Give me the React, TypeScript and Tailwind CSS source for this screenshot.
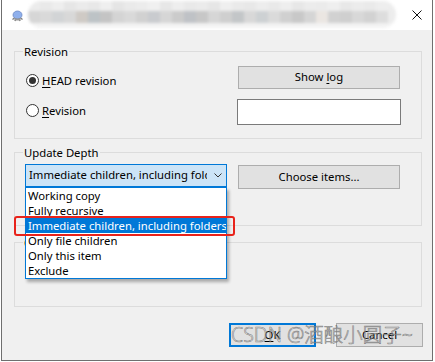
import React from 'react';

const TOP_BLOCKS = [
  'bg-[#ececec]', 'bg-[#e9e9e9]', 'bg-[#eeeeee]', 'bg-[#e6e6e6]', 'bg-[#ebebeb]', 'bg-[#e8e8e8]',
  'bg-[#efefef]', 'bg-[#e5e5e5]', 'bg-[#eaeaea]', 'bg-[#ececec]', 'bg-[#f0f0f0]', 'bg-[#e7e7e7]',
  'bg-[#eeeeee]', 'bg-[#e9e9e9]', 'bg-[#ebebeb]', 'bg-[#e6e6e6]', 'bg-[#efefef]', 'bg-[#eaeaea]',
  'bg-[#e8e8e8]', 'bg-[#ededed]', 'bg-[#e9e9e9]', 'bg-[#eeeeee]', 'bg-[#e7e7e7]', 'bg-[#ececec]',
  'bg-[#ebebeb]', 'bg-[#efefef]', 'bg-[#e8e8e8]', 'bg-[#ececec]', 'bg-[#eaeaea]', 'bg-[#eeeeee]',
];

const BOTTOM_BLOCKS = [
  'bg-[#d6d6d6]', 'bg-[#d9d9d9]', 'bg-[#d2d4d6]', 'bg-[#d8d8d8]', 'bg-[#cfcac5]', 'bg-[#bdc3c6]',
  'bg-[#c4c4c4]', 'bg-[#d4d4d4]', 'bg-[#d9d9d9]', 'bg-[#d1d1d1]', 'bg-[#c9cbcf]', 'bg-[#d6d6d6]',
  'bg-[#cbcbcb]', 'bg-[#bfc2c6]', 'bg-[#c7c7c7]', 'bg-[#d6d6d6]', 'bg-[#cfcfcf]', 'bg-[#c3c6c8]',
  'bg-[#d8d8d8]', 'bg-[#cdd1d3]', 'bg-[#dadada]', 'bg-[#d0d0d0]', 'bg-[#c8c8c8]', 'bg-[#d5d5d5]',
  'bg-[#ebe6e2]', 'bg-[#d1d1d1]', 'bg-[#cfcfcf]', 'bg-[#d8d8d8]', 'bg-[#d2d2d2]', 'bg-[#dddddd]',
];

const DEPTHS = [
  'Working copy',
  'Fully recursive',
  'Immediate children, including folders',
  'Only file children',
  'Only this item',
  'Exclude',
];

const Radio = ({ checked, children }: { checked?: boolean; children: React.ReactNode }) => (
  <div className="flex items-center gap-[3px] leading-[15px]">
    <span className="w-[13px] h-[13px] rounded-full border border-[#333] bg-white flex items-center justify-center">
      {checked && <span className="w-[7px] h-[7px] rounded-full bg-[#333]" />}
    </span>
    <span>{children}</span>
  </div>
);

const GroupBox = ({ label, className, children }: { label: string; className: string; children?: React.ReactNode }) => (
  <div className={`relative border border-[#dcdcdc] ${className}`}>
    <span className="absolute left-[8px] top-[-8px] px-px bg-[#f0f0f0] leading-[15px]">{label}</span>
    {children}
  </div>
);

const TitleBar = () => (
  <div className="h-[30px] bg-white flex items-center">
    <svg className="ml-[9px] mt-[2px]" width="13" height="12" viewBox="0 0 13 12">
      <ellipse cx="6.5" cy="5" rx="4.5" ry="4" fill="#8fb0ec" stroke="#6a86c4" strokeWidth="0.8" />
      <path d="M1.5 9.5 L3.5 8 M11.5 9.5 L9.5 8 M4 11 L5 8.5 M9 11 L8 8.5" stroke="#7a7a7a" strokeWidth="1.3" />
      <rect x="3.5" y="8.5" width="6" height="2" fill="#9a9a9a" />
    </svg>
    <div className="ml-[4px] w-[368px] h-[27px] mt-[-2px] flex flex-col rounded-[14px] overflow-hidden blur-[1.5px] bg-[#ededed]">
      <div className="flex h-[10px]">
        {TOP_BLOCKS.map((c, i) => (
          <div key={i} className={`w-[12px] shrink-0 ${c}`} />
        ))}
      </div>
      <div className="flex h-[12px]">
        {BOTTOM_BLOCKS.map((c, i) => (
          <div key={i} className={`w-[12px] shrink-0 ${c}`} />
        ))}
      </div>
      <div className="flex-1 bg-[#f3f3f3]" />
    </div>
    <svg className="ml-auto mr-[10px]" width="10" height="10" viewBox="0 0 10 10">
      <path d="M0.5 0.5 L9.5 9.5 M9.5 0.5 L0.5 9.5" stroke="#111" strokeWidth="1" />
    </svg>
  </div>
);

export default function App() {
  return (
    <div className="w-[435px] h-[362px] bg-white font-['Noto_Sans',sans-serif] text-[11.3px] text-black">
      <div className="relative ml-px w-[432px] h-[361px] border-x border-b border-[#6f6f6f] bg-[#f0f0f0] flex flex-col">
        <TitleBar />

        <div className="pt-[21px] pl-[12px] pr-[10px] flex flex-col">
          {/* Revision */}
          <GroupBox label="Revision" className="h-[88px] pt-[14px] pl-[11px] pr-[21px]">
            <div className="flex justify-between items-start h-[23px]">
              <div className="mt-[7px]">
                <Radio checked>
                  <span className="underline underline-offset-2">H</span>EAD revision
                </Radio>
              </div>
              <button className="w-[162px] h-[23px] border border-[#adadad] bg-[#e1e1e1]">
                Show <span className="underline underline-offset-2">l</span>og
              </button>
            </div>
            <div className="flex justify-between items-start mt-[10px]">
              <div className="mt-[4px]">
                <Radio>
                  <span className="underline underline-offset-2">R</span>evision
                </Radio>
              </div>
              <div className="w-[164px] h-[26px] -mr-px border border-[#7a7a7a] bg-white" />
            </div>
          </GroupBox>

          {/* Update Depth */}
          <GroupBox label="Update Depth" className="mt-[13px] h-[74px] pt-[11px] pl-[10px] pr-[21px] z-10">
            <div className="flex justify-between items-start">
              <div className="relative w-[202px]">
                <div className="h-[23px] border border-[#0078d7] bg-[#cce4f7] flex items-center pl-[3px]">
                  <span className="w-[178px] overflow-hidden whitespace-nowrap">Immediate children, including folders</span>
                  <svg className="ml-auto mr-[4px]" width="8" height="5" viewBox="0 0 8 5">
                    <path d="M0.5 0.5 L4 4 L7.5 0.5" fill="none" stroke="#333" strokeWidth="1" />
                  </svg>
                </div>
                <div className="absolute left-0 top-full w-[202px] border border-[#0078d7] bg-white shadow-[2px_3px_3px_rgba(0,0,0,0.3)]">
                  {DEPTHS.map((d, i) => (
                    <div
                      key={d}
                      className={`h-[15px] leading-[15px] pl-[2px] whitespace-nowrap overflow-hidden ${
                        i === 2 ? 'bg-[#0078d7] text-white' : ''
                      }`}
                    >
                      {d}
                    </div>
                  ))}
                  <div className="absolute left-[-12px] top-[28px] w-[221px] h-[20px] border-2 border-[#e8231b] rounded-[3px]" />
                </div>
              </div>
              <button className="mt-px w-[162px] h-[24px] border border-[#adadad] bg-[#e1e1e1]">Choose items...</button>
            </div>
          </GroupBox>

          {/* hidden group behind the dropdown */}
          <GroupBox label="Options" className="mt-[16px] h-[65px]" />

          <div className="mt-[16px] flex justify-end gap-[20px] -mr-px">
            <button className="w-[87px] h-[24px] border-2 border-[#0078d7] bg-[#e1e1e1]">
              <span className="underline underline-offset-2">O</span>K
            </button>
            <button className="w-[87px] h-[24px] border border-[#adadad] bg-[#e1e1e1]">Cancel</button>
          </div>
        </div>

        <span className="absolute left-[229px] top-[322px] text-[19.5px] leading-[25px] font-['Noto_Sans','Noto_Sans_CJK_SC',sans-serif] font-light text-[rgba(255,255,255,0.5)] [-webkit-text-stroke:0.6px_rgba(80,80,80,0.7)] whitespace-nowrap pointer-events-none">
          CSDN @酒酿小圆子~
        </span>
      </div>
    </div>
  );
}
